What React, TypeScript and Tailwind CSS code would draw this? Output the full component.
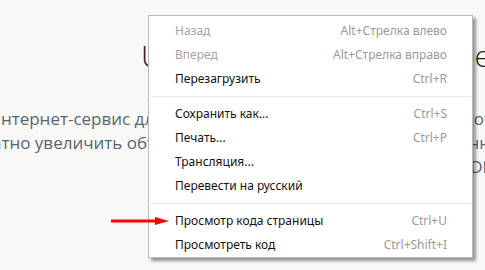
import React from "react";

type Item = { label: string; shortcut?: string; disabled?: boolean } | "sep";

const items: Item[] = [
  { label: "Назад", shortcut: "Alt+Стрелка влево", disabled: true },
  { label: "Вперед", shortcut: "Alt+Стрелка вправо", disabled: true },
  { label: "Перезагрузить", shortcut: "Ctrl+R" },
  "sep",
  { label: "Сохранить как...", shortcut: "Ctrl+S" },
  { label: "Печать...", shortcut: "Ctrl+P" },
  { label: "Трансляция..." },
  { label: "Перевести на русский" },
  "sep",
  { label: "Просмотр кода страницы", shortcut: "Ctrl+U" },
  { label: "Просмотреть код", shortcut: "Ctrl+Shift+I" },
];

export default function App() {
  return (
    <div
      className="relative h-[270px] w-[485px] overflow-hidden bg-[#f8f8f7]"
      style={{ fontFamily: '"Open Sans", "Noto Sans", sans-serif' }}
    >
      {/* background page */}
      <div className="flex flex-col pt-[38px]">
        <div className="flex h-[36px] items-center justify-between text-[30px] font-light leading-none text-[#222]">
          <span className="ml-[141px] whitespace-nowrap">Uслуги</span>
          <span className="-mr-[6px] whitespace-nowrap">вое</span>
        </div>
        <div className="mt-[33px] flex flex-col text-[17px] leading-[24px] text-[#5a6572]">
          <div className="flex justify-between whitespace-nowrap">
            <span className="-ml-[12px]">Интернет-сервис для</span>
            <span className="-mr-[7px]">от</span>
          </div>
          <div className="flex justify-between whitespace-nowrap">
            <span className="-ml-[8px]">атно увеличить объём</span>
            <span className="-mr-[5px]">нн</span>
          </div>
          <div className="flex justify-between whitespace-nowrap">
            <span></span>
            <span className="-mr-[7px]">DE</span>
          </div>
        </div>
      </div>

      {/* context menu */}
      <div
        className="absolute left-[148px] top-[15px] w-[325px] border border-[#b9b9b9] bg-white pb-0 pt-[3px] shadow-[3px_3px_3px_rgba(0,0,0,0.4)]"
        style={{ fontFamily: '"Noto Sans", "Open Sans", sans-serif' }}
      >
        {items.map((it, i) =>
          it === "sep" ? (
            <div key={i} className="mx-[1px] my-[5px] h-px bg-[#e9e9e9]" />
          ) : (
            <div
              key={i}
              className="flex h-6 items-center justify-between pl-[26px] pr-[25px] text-[12px]"
            >
              <span className={it.disabled ? "text-[#a3a3a3]" : "text-[#111]"}>
                {it.label}
              </span>
              {it.shortcut && (
                <span className="text-[#9a9a9a]">{it.shortcut}</span>
              )}
            </div>
          )
        )}
      </div>

      {/* red arrow */}
      <svg
        className="absolute left-[110px] top-[214px]"
        width="62"
        height="14"
        viewBox="0 0 62 14"
      >
        <rect x="1" y="5.5" width="46" height="3" fill="#ff0000" />
        <polygon points="45,3 59,7 45,11" fill="#ff0000" />
      </svg>
    </div>
  );
}
